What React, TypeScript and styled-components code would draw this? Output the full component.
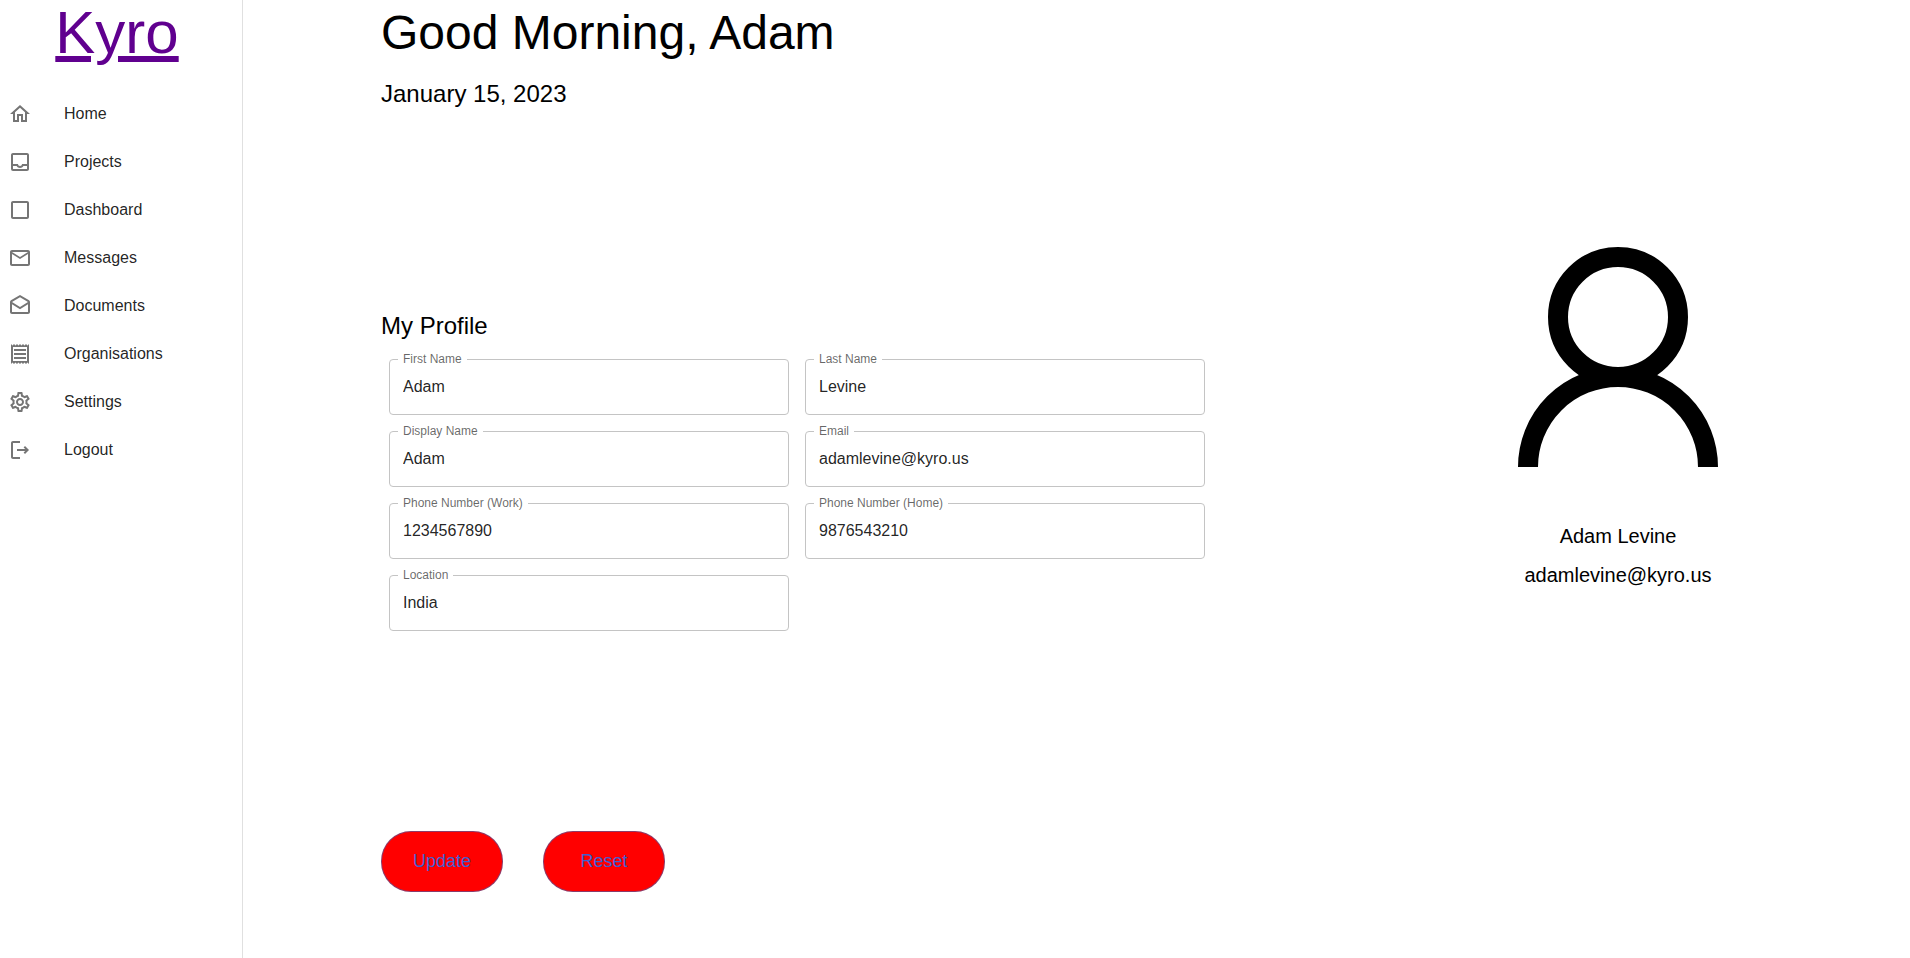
import React from "react";
import styled, { createGlobalStyle } from "styled-components";
import {
  MdCheckBoxOutlineBlank,
  MdMailOutline,
  MdOutlineDrafts,
  MdOutlineHome,
  MdOutlineInbox,
  MdOutlineReceipt,
  MdOutlineSettings,
} from "react-icons/md";

const GlobalStyle = createGlobalStyle`
  *, *::before, *::after { box-sizing: border-box; }
  body {
    margin: 0;
    background: #fff;
    color: #000;
    font-family: "Liberation Sans", Arial, sans-serif;
  }
`;

const Page = styled.div`
  display: flex;
  min-height: 100vh;
`;

const Sidebar = styled.aside`
  flex: 0 0 243px;
  border-right: 1px solid #e0e0e0;
`;

const Brand = styled.header`
  display: flex;
  justify-content: center;
  padding-right: 8px;
`;

const Logo = styled.a`
  font-size: 60px;
  line-height: 66px;
  color: #60008f;
`;

const NavList = styled.ul`
  list-style: none;
  margin: 24px 0 0;
  padding: 0;
`;

const NavLink = styled.a`
  display: flex;
  align-items: center;
  gap: 32px;
  height: 48px;
  padding: 0 8px;
  font-size: 16px;
  line-height: 24px;
  color: rgba(0, 0, 0, 0.87);
  text-decoration: none;

  svg {
    width: 24px;
    height: 24px;
    color: #757575;
  }
`;

const Main = styled.main`
  flex: 1;
  padding: 0 138px;
`;

const Greeting = styled.h1`
  margin: 0 0 12px;
  font-size: 48px;
  font-weight: 400;
  line-height: 66px;
`;

const Subheading = styled.h2`
  margin: 0;
  font-size: 24px;
  font-weight: 400;
  line-height: 32px;
`;

const Content = styled.div`
  display: flex;
  justify-content: space-between;
  margin-top: 137px;
`;

const ProfileForm = styled.form`
  flex: 0 1 832px;
  margin-top: 63px;
`;

const Fields = styled.div`
  display: grid;
  grid-template-columns: 1fr 1fr;
  gap: 10px 16px;
  margin-top: 3px;
  padding: 8px;
`;

const FieldBox = styled.div`
  position: relative;
  height: 62px;
`;

const Label = styled.label`
  position: absolute;
  top: 0;
  left: 9px;
  padding: 0 5px;
  background: #fff;
  font-size: 12px;
  line-height: 12px;
  color: rgba(0, 0, 0, 0.6);
`;

const Input = styled.input`
  width: 100%;
  height: 56px;
  margin-top: 6px;
  padding: 0 13px;
  border: 1px solid #c4c4c4;
  border-radius: 4px;
  background: transparent;
  font: inherit;
  font-size: 16px;
  color: rgba(0, 0, 0, 0.87);
`;

const Actions = styled.div`
  display: flex;
  gap: 40px;
  margin-top: 192px;
`;

const ActionButton = styled.button`
  width: 122px;
  height: 61px;
  padding: 0;
  border: 1px solid rgba(25, 118, 210, 0.5);
  border-radius: 30px;
  background: #f00;
  font: inherit;
  font-size: 18px;
  color: #3f5fd0;
`;

const ProfileCard = styled.section`
  display: flex;
  flex-direction: column;
  align-items: center;
  width: 200px;
  margin-right: 54px;
`;

const Avatar = styled.svg`
  width: 200px;
  height: 220px;
`;

const CardText = styled.p`
  margin: 0;
  font-size: 20px;
  line-height: 39px;
`;

const CardDetails = styled.div`
  margin-top: 50px;
  text-align: center;
`;

const LogoutIcon = () => (
  <svg viewBox="0 0 24 24" fill="currentColor" aria-hidden="true">
    <path d="M5 5h7V3H5c-1.1 0-2 .9-2 2v14c0 1.1.9 2 2 2h7v-2H5z" />
    <path d="M9 11h8.2l-1.6-1.6L17 8l4 4-4 4-1.400-1.400 1.600-1.600H9z" />
  </svg>
);

const navItems = [
  { name: "Home", Icon: MdOutlineHome },
  { name: "Projects", Icon: MdOutlineInbox },
  { name: "Dashboard", Icon: MdCheckBoxOutlineBlank },
  { name: "Messages", Icon: MdMailOutline },
  { name: "Documents", Icon: MdOutlineDrafts },
  { name: "Organisations", Icon: MdOutlineReceipt },
  { name: "Settings", Icon: MdOutlineSettings },
  { name: "Logout", Icon: LogoutIcon },
];

const fields = [
  { id: "firstName", label: "First Name", value: "Adam" },
  { id: "lastName", label: "Last Name", value: "Levine" },
  { id: "displayName", label: "Display Name", value: "Adam" },
  { id: "email", label: "Email", value: "adamlevine@kyro.us" },
  { id: "phoneWork", label: "Phone Number (Work)", value: "1234567890" },
  { id: "phoneHome", label: "Phone Number (Home)", value: "9876543210" },
  { id: "location", label: "Location", value: "India" },
];

export default function App() {
  return (
    <>
      <GlobalStyle />
      <Page>
        <Sidebar>
          <Brand>
            <Logo href="#">Kyro</Logo>
          </Brand>
          <nav>
            <NavList>
              {navItems.map(({ name, Icon }) => (
                <li key={name}>
                  <NavLink href={`#${name.toLowerCase()}`}>
                    <Icon />
                    {name}
                  </NavLink>
                </li>
              ))}
            </NavList>
          </nav>
        </Sidebar>
        <Main>
          <Greeting>Good Morning, Adam</Greeting>
          <Subheading as="p">January 15, 2023</Subheading>
          <Content>
            <ProfileForm>
              <Subheading>My Profile</Subheading>
              <Fields>
                {fields.map(({ id, label, value }) => (
                  <FieldBox key={id}>
                    <Input id={id} defaultValue={value} />
                    <Label htmlFor={id}>{label}</Label>
                  </FieldBox>
                ))}
              </Fields>
              <Actions>
                <ActionButton type="submit">Update</ActionButton>
                <ActionButton type="reset">Reset</ActionButton>
              </Actions>
            </ProfileForm>
            <ProfileCard>
              <Avatar viewBox="0 0 200 220" fill="none" stroke="#000" strokeWidth="20" aria-hidden="true">
                <circle cx="100" cy="70" r="60" />
                <path d="M10 220a90 90 0 0 1 180 0" />
              </Avatar>
              <CardDetails>
                <CardText>Adam Levine</CardText>
                <CardText>adamlevine@kyro.us</CardText>
              </CardDetails>
            </ProfileCard>
          </Content>
        </Main>
      </Page>
    </>
  );
}
